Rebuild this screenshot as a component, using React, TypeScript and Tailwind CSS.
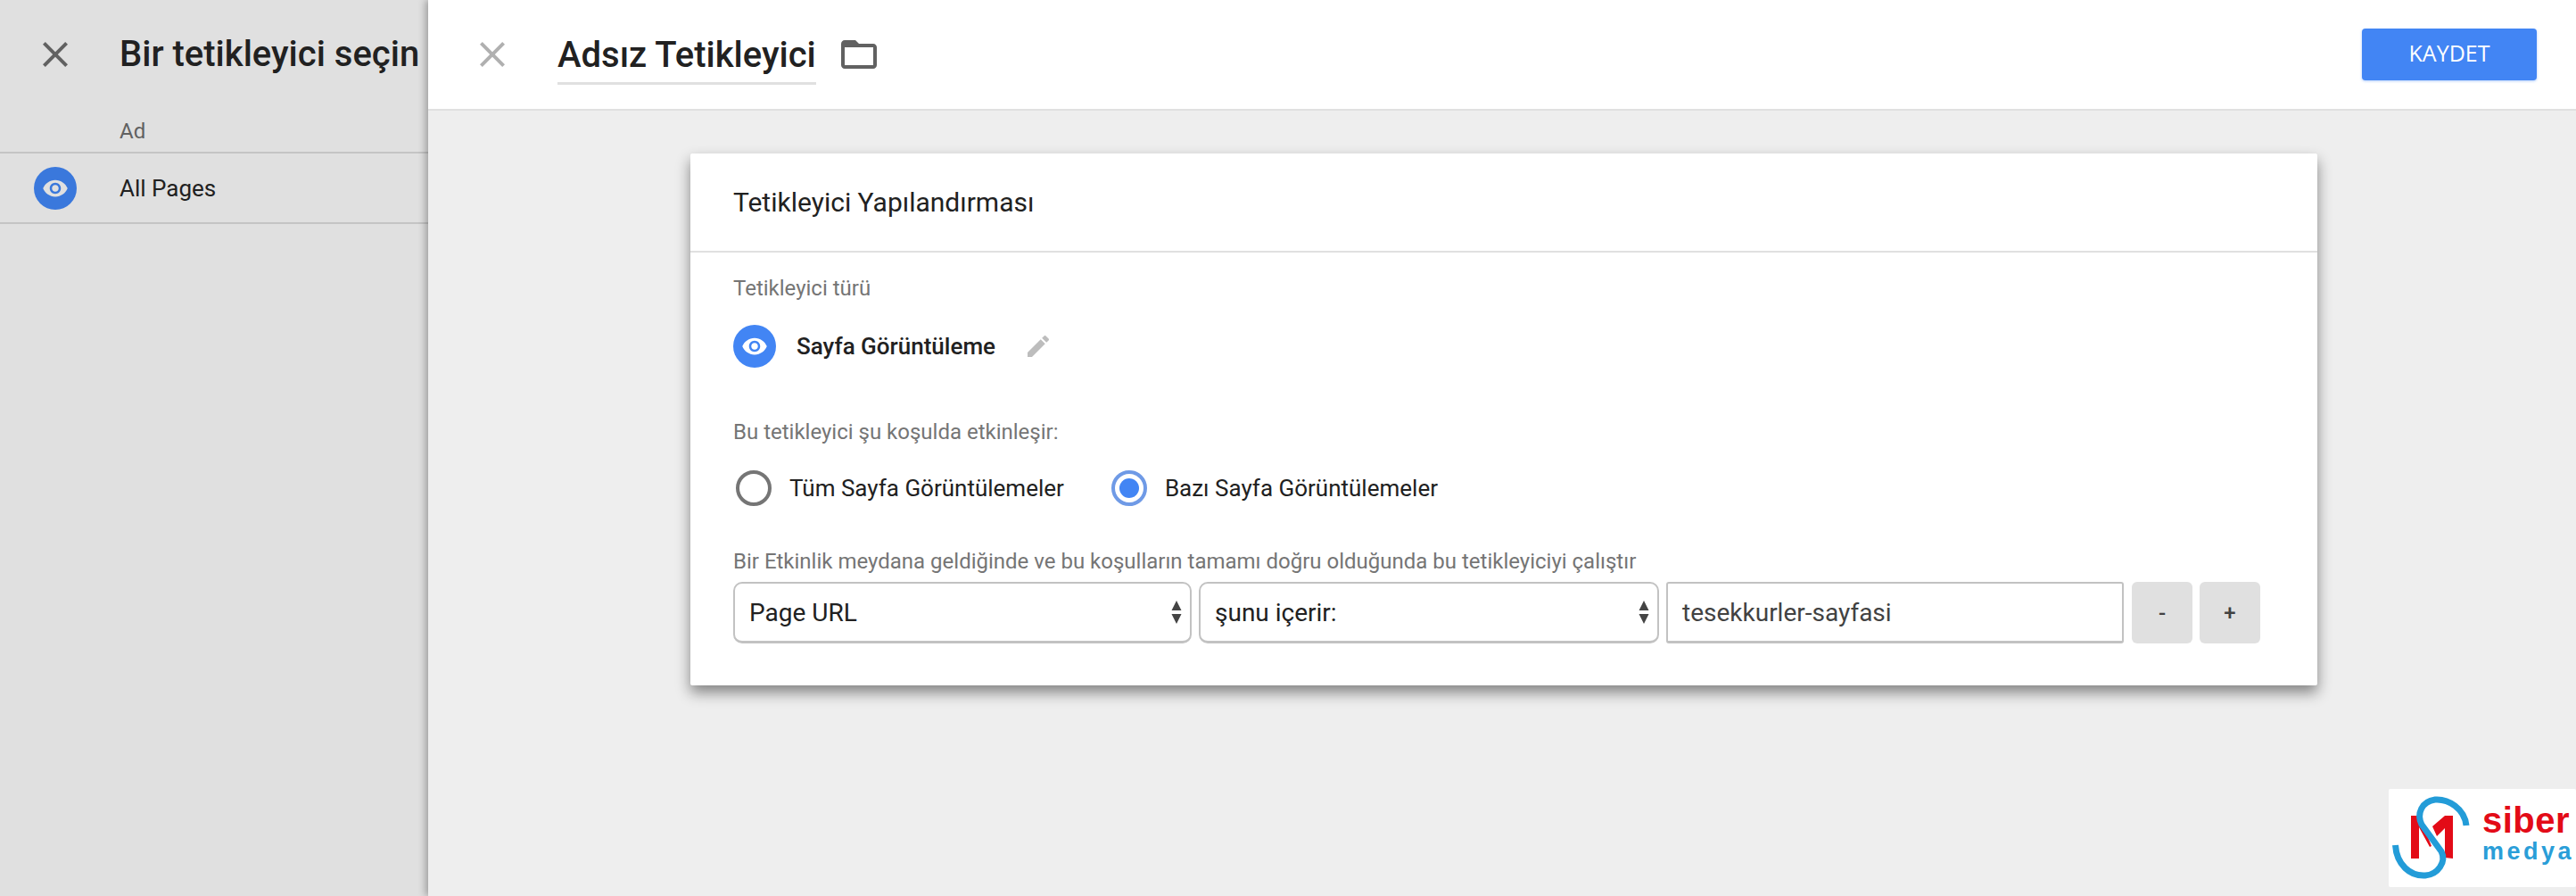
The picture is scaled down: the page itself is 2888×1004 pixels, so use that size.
const eye = "M12 4.5C7 4.5 2.73 7.61 1 12c1.73 4.39 6 7.5 11 7.5s9.27-3.11 11-7.5c-1.73-4.39-6-7.5-11-7.5zM12 17c-2.76 0-5-2.24-5-5s2.24-5 5-5 5 2.24 5 5-2.24 5-5 5zm0-8c-1.66 0-3 1.34-3 3s1.34 3 3 3 3-1.34 3-3-1.34-3-3-3z";
const close = "M19 6.41L17.59 5 12 10.59 6.41 5 5 6.41 10.59 12 5 17.59 6.41 19 12 13.41 17.59 19 19 17.59 13.41 12z";

function EyeBadge({ bg, fill }: { bg: string; fill: string }) {
    return (
        <div className={`flex h-[48px] w-[48px] shrink-0 items-center justify-center rounded-full ${bg}`}>
            <svg viewBox="0 0 24 24" className={`h-[30px] w-[30px] ${fill}`}>
                <path d={eye} />
            </svg>
        </div>
    );
}

function SelectBox({ label, width }: { label: string; width: string }) {
    return (
        <div className={`flex h-[69px] items-center justify-between rounded-[10px] border-2 border-[#c2c2c2] border-b-[3px] pl-[16px] pr-[8px] ${width}`}>
            <span className="pt-[2px] text-[28px] text-[#212121]">{label}</span>
            <svg viewBox="0 0 12 28" className="h-[28px] w-[14px] fill-[#444]">
                <path d="M6 1l5.5 11H.5zM6 27L.5 16h11z" />
            </svg>
        </div>
    );
}

function Logo() {
    return (
        <div className="absolute left-[2678px] top-[884px] h-[110px] w-[210px] overflow-hidden rounded-[2px] bg-white">
            <div className="flex h-full">
                <svg viewBox="0 0 100 110" className="h-[110px] w-[100px] shrink-0">
                    <path d="M25 30h9v48h-9zM63 30h9v48l-9-1z" fill="#e30b17" />
                    <path d="M34 30l14 34-2 1-12-22zM63 30v14l-9 9-5-11z" fill="#e30b17" />
                    <path d="M87 41C85 22 67 11 52 12 37 14 31 28 37 40L59 70C65 82 55 96 41 97 24 98 9 85 7.5 63" fill="none" stroke="#239cd8" strokeWidth="7" />
                </svg>
                <div className="ml-[5px] flex flex-col pt-[14px] font-['Liberation_Sans',sans-serif]">
                    <span className="text-[40px] font-bold leading-[42px] tracking-[0.5px] text-[#e30b17]">siber</span>
                    <span className="text-[27px] font-bold leading-[28px] tracking-[3.5px] text-[#2a9ed8]">medya</span>
                </div>
            </div>
        </div>
    );
}

export default function App() {
    return (
        <div className="relative flex h-[1004px] w-[2888px] overflow-hidden bg-[#eeeeee] font-['Roboto',sans-serif]">
            {/* Sidebar */}
            <div className="w-[480px] shrink-0 overflow-hidden bg-[#e0e0e0]">
                <div className="flex h-[122px] items-center whitespace-nowrap pl-[38px]">
                    <svg viewBox="0 0 24 24" className="h-[48px] w-[48px] fill-[#616161]">
                        <path d={close} />
                    </svg>
                    <span className="ml-[48px] text-[40px] font-medium text-[#212121]">Bir tetikleyici seçin</span>
                </div>
                <div className="flex h-[50px] items-center border-b-2 border-[#c4c4c4] pl-[134px] pt-[2px] text-[24px] text-[#616161]">Ad</div>
                <div className="flex h-[79px] items-center border-b-2 border-[#c4c4c4] pl-[38px]">
                    <EyeBadge bg="bg-[#3a78dc]" fill="fill-[#e0e0e0]" />
                    <span className="ml-[48px] pt-[2px] text-[26px] text-[#212121]">All Pages</span>
                </div>
            </div>

            {/* Panel */}
            <div className="relative z-10 flex flex-1 flex-col shadow-[-3px_0_8px_rgba(0,0,0,0.3)]">
                <div className="flex h-[124px] shrink-0 items-center border-b-2 border-[#e0e0e0] bg-white pl-[48px] pr-[44px]">
                    <svg viewBox="0 0 24 24" className="h-[48px] w-[48px] fill-[#b0b0b0]">
                        <path d={close} />
                    </svg>
                    <div className="ml-[49px] border-b-[3px] border-[#e0e0e0] pb-[6px] pt-[10px] text-[40px] font-medium leading-[48px] text-[#212121]">
                        Adsız Tetikleyici
                    </div>
                    <svg viewBox="0 0 24 24" className="ml-[24px] h-[48px] w-[48px] fill-[#616161]">
                        <path d="M20 6h-8l-2-2H4c-1.1 0-1.99.9-1.99 2L2 18c0 1.1.9 2 2 2h16c1.1 0 2-.9 2-2V8c0-1.1-.9-2-2-2zm0 12H4V8h16v10z" />
                    </svg>
                    <button className="ml-auto flex h-[58px] w-[196px] items-center justify-center rounded-[4px] bg-[#4285f4] pb-[2px] font-['Open_Sans',sans-serif] text-[25px] font-medium text-white shadow-[0_1px_3px_rgba(66,133,244,0.4)]">
                        KAYDET
                    </button>
                </div>

                <div className="flex-1 bg-[#eeeeee] pl-[294px] pt-[48px]">
                    {/* Card */}
                    <div className="w-[1824px] rounded-[2px] bg-white shadow-[0_8px_16px_rgba(0,0,0,0.45)]">
                        <div className="flex h-[111px] items-center border-b-2 border-[#e0e0e0] px-[48px] text-[30px] text-[#212121]">
                            Tetikleyici Yapılandırması
                        </div>
                        <div className="px-[48px] pb-[47px] pt-[24px]">
                            <div className="text-[24px] leading-[32px] text-[#757575]">Tetikleyici türü</div>
                            <div className="mt-[25px] flex items-center">
                                <EyeBadge bg="bg-[#4285f4]" fill="fill-white" />
                                <span className="ml-[23px] text-[26px] font-medium text-[#212121]">Sayfa Görüntüleme</span>
                                <svg viewBox="0 0 24 24" className="ml-[32px] h-[32px] w-[32px] fill-[#bdbdbd]">
                                    <path d="M3 17.25V21h3.75L17.81 9.94l-3.75-3.75L3 17.25zM20.71 7.04c.39-.39.39-1.02 0-1.41l-2.34-2.34c-.39-.39-1.02-.39-1.41 0l-1.83 1.83 3.75 3.75 1.83-1.83z" />
                                </svg>
                            </div>

                            <div className="mt-[56px] text-[24px] leading-[32px] text-[#757575]">Bu tetikleyici şu koşulda etkinleşir:</div>
                            <div className="mt-[26px] flex items-center pl-[3px] text-[26px] text-[#212121]">
                                <div className="h-[40px] w-[40px] rounded-full border-4 border-[#757575]" />
                                <span className="ml-[20px] pt-[2px]">Tüm Sayfa Görüntülemeler</span>
                                <div className="ml-[53px] flex h-[40px] w-[40px] items-center justify-center rounded-full border-4 border-[#6f9ae6]">
                                    <div className="h-[22px] w-[22px] rounded-full bg-[#4285f4]" />
                                </div>
                                <span className="ml-[20px] pt-[2px]">Bazı Sayfa Görüntülemeler</span>
                            </div>

                            <div className="mt-[46px] text-[24px] leading-[32px] text-[#757575]">
                                Bir Etkinlik meydana geldiğinde ve bu koşulların tamamı doğru olduğunda bu tetikleyiciyi çalıştır
                            </div>
                            <div className="mt-[7px] flex items-center">
                                <SelectBox label="Page URL" width="w-[514px]" />
                                <div className="ml-[8px]">
                                    <SelectBox label="şunu içerir:" width="w-[516px]" />
                                </div>
                                <div className="ml-[8px] flex h-[69px] w-[513px] items-center rounded-[3px] border-2 border-[#c2c2c2] border-b-[3px] pl-[16px] pt-[2px] text-[28px] text-[#424242]">
                                    tesekkurler-sayfasi
                                </div>
                                <button className="ml-[9px] flex h-[69px] w-[68px] items-center justify-center rounded-[6px] bg-[#e0e0e0] text-[24px] font-medium text-[#424242]">-</button>
                                <button className="ml-[8px] flex h-[69px] w-[68px] items-center justify-center rounded-[6px] bg-[#e0e0e0] text-[24px] font-medium text-[#424242]">+</button>
                            </div>
                        </div>
                    </div>
                </div>
            </div>

            <div className="z-20">
                <Logo />
            </div>
        </div>
    );
}
